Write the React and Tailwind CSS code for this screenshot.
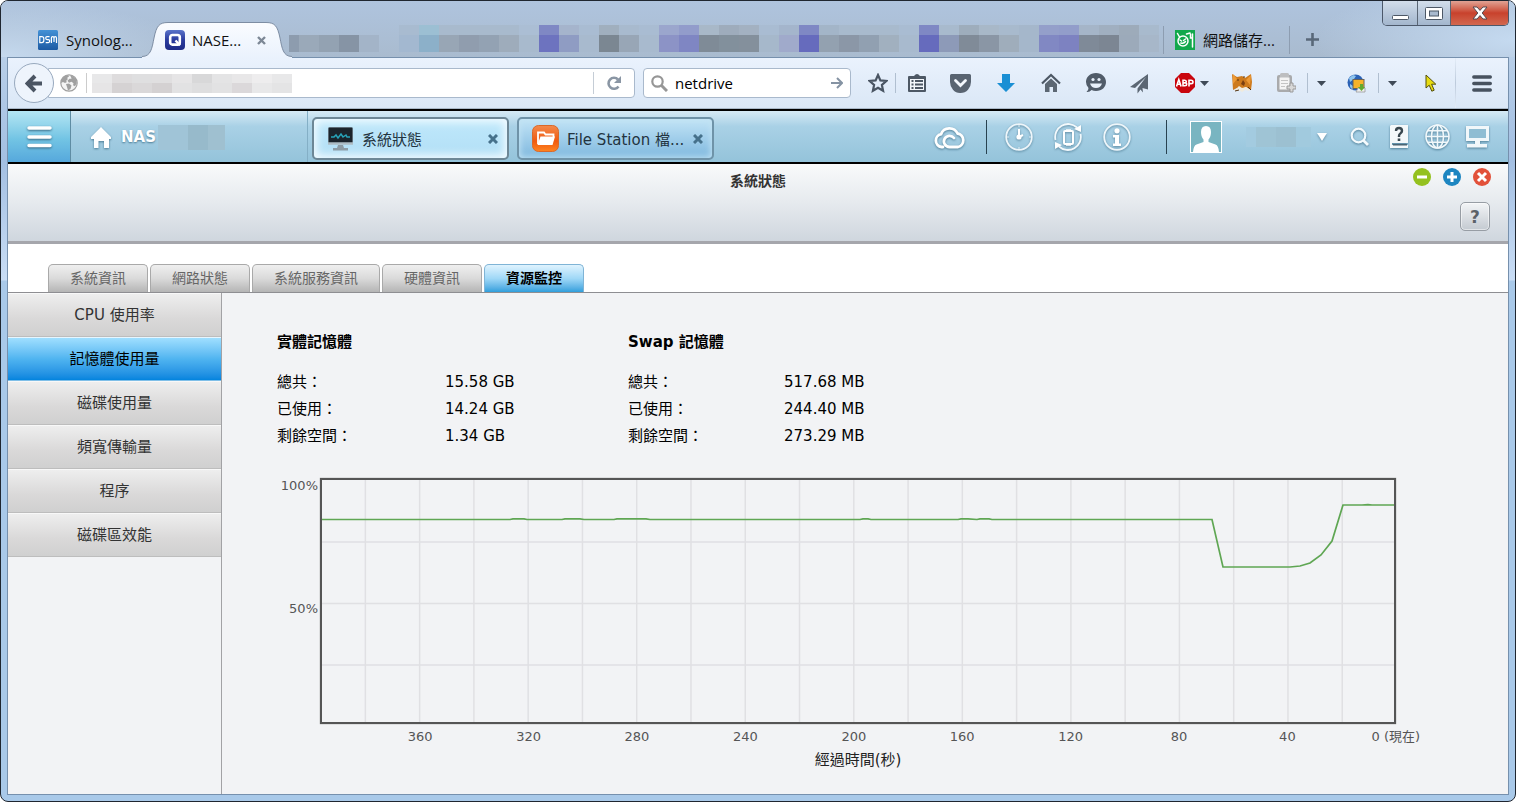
import React from "react";

// upper / lower colour of each 20px block in the blurred part of the tab strip
const STRIP_BLOCKS = [
  ["bg-[#a8bbd0]", "bg-[#a3b8d0]"],
  ["bg-[#9cbfd3]", "bg-[#8cb0c9]"],
  ["bg-[#a8bacd]", "bg-[#98a6b5]"],
  ["bg-[#a8bacd]", "bg-[#909dae]"],
  ["bg-[#a8bacd]", "bg-[#93a2b3]"],
  ["bg-[#a8bacd]", "bg-[#9eacbb]"],
  ["bg-[#abbed4]", "bg-[#a8bacd]"],
  ["bg-[#7f88c4]", "bg-[#6d73bf]"],
  ["bg-[#a5b4cc]", "bg-[#8f9cc3]"],
  ["bg-[#a9bcd2]", "bg-[#a8bace]"],
  ["bg-[#a0afbe]", "bg-[#7b8792]"],
  ["bg-[#a8bace]", "bg-[#98a6b6]"],
  ["bg-[#a9bcd2]", "bg-[#a8bace]"],
  ["bg-[#9ba6cd]", "bg-[#8c93c6]"],
  ["bg-[#929ccb]", "bg-[#7f86c3]"],
  ["bg-[#a8b8c8]", "bg-[#7f8b97]"],
  ["bg-[#9eacbc]", "bg-[#82909c]"],
  ["bg-[#a3b1c1]", "bg-[#84909c]"],
  ["bg-[#a9bcd2]", "bg-[#a6b8cb]"],
  ["bg-[#a4b5cc]", "bg-[#a0aacb]"],
  ["bg-[#7f88c4]", "bg-[#666bbd]"],
  ["bg-[#a3b5c8]", "bg-[#93a1b0]"],
  ["bg-[#a8bacd]", "bg-[#8b97a7]"],
  ["bg-[#a8bacd]", "bg-[#91a0b1]"],
  ["bg-[#a8bacd]", "bg-[#a1b0bf]"],
  ["bg-[#a9bcd2]", "bg-[#a8bace]"],
  ["bg-[#7f88c4]", "bg-[#666bbd]"],
  ["bg-[#a8bacd]", "bg-[#8d9ab8]"],
  ["bg-[#9eadbc]", "bg-[#808b98]"],
  ["bg-[#a8b8c8]", "bg-[#8a96a5]"],
  ["bg-[#a8bacd]", "bg-[#9fadbb]"],
  ["bg-[#a5b7cb]", "bg-[#a5b7cb]"],
  ["bg-[#949fca]", "bg-[#8188c3]"],
  ["bg-[#929dca]", "bg-[#7d82c1]"],
  ["bg-[#a5b5c8]", "bg-[#7f8a98]"],
  ["bg-[#a0afc0]", "bg-[#7c8693]"],
  ["bg-[#9dabba]", "bg-[#9caaba]"],
  ["bg-[#a8bacd]", "bg-[#a7b7c9]"],
];

const URL_BLOCKS = [
  ["bg-[#e8e8e9]", "bg-[#e6e5e6]"],
  ["bg-[#dedcdd]", "bg-[#d5d2d3]"],
  ["bg-[#dfdfe0]", "bg-[#dad8d9]"],
  ["bg-[#e0dfe0]", "bg-[#d4d1d2]"],
  ["bg-[#e6e5e6]", "bg-[#e2e2e3]"],
  ["bg-[#d8d8d9]", "bg-[#dededf]"],
  ["bg-[#e4e4e5]", "bg-[#e2e2e3]"],
  ["bg-[#e8e7e8]", "bg-[#dbd8da]"],
  ["bg-[#eeedee]", "bg-[#e8e8e9]"],
  ["bg-[#e8e8e9]", "bg-[#e4e4e5]"],
];

const TABS = ["系統資訊", "網路狀態", "系統服務資訊", "硬體資訊", "資源監控"];

const MENU = [
  "CPU 使用率",
  "記憶體使用量",
  "磁碟使用量",
  "頻寬傳輸量",
  "程序",
  "磁碟區效能",
];

const MEMORY = [
  {
    title: "實體記憶體",
    rows: [
      ["總共：", "15.58 GB"],
      ["已使用：", "14.24 GB"],
      ["剩餘空間：", "1.34 GB"],
    ],
    width: "w-[351px]",
    label: "w-[168px]",
  },
  {
    title: "Swap 記憶體",
    rows: [
      ["總共：", "517.68 MB"],
      ["已使用：", "244.40 MB"],
      ["剩餘空間：", "273.29 MB"],
    ],
    width: "w-[351px]",
    label: "w-[156px]",
  },
];

const X_LABELS = [360, 320, 280, 240, 200, 160, 120, 80, 40, "0 (現在)"];

const USAGE =
  "0,39.5 188,39.5 191,38.8 202,38.8 205,39.5 240,39.5 243,38.8 258,38.8 262,39.5 292,39.5 295,38.8 324,38.8 328,39.5 538,39.5 541,38.8 546,38.8 549,39.5 636,39.5 639,38.8 646,38.8 655,39.5 658,38.8 667,38.8 670,39.5 890,39.5 901,87 968,87 978,86 988,83 999,75 1010,61 1021,25 1040,25 1046,24.6 1050,25 1072,25";

const Divider = () => <span className="h-5 w-px bg-[#b0bfd0]" />;

const Caret = () => (
  <svg className="h-[5px] w-[9px]" viewBox="0 0 9 5">
    <path d="M0 0h9L4.500 5z" fill="#3f4a57" />
  </svg>
);

const Blocks = ({ cells, top, bottom }) => (
  <div className="flex min-w-0 overflow-hidden">
    {cells.map(([a, b], i) => (
      <div key={i} className="w-5 shrink-0">
        <div className={`${top} ${a}`} />
        <div className={`${bottom} ${b}`} />
      </div>
    ))}
  </div>
);

const WindowControls = () => (
  <div className="ml-auto mr-[6px] flex h-[25px] shrink-0 self-start overflow-hidden rounded-b-[5px] border border-t-0 border-[#4c586a]">
    <button
      aria-label="Minimize"
      className="flex w-[35px] items-end justify-center border-r border-[#5a6675] bg-linear-to-b from-[#d3deeb] via-[#bccbdd] via-45% to-[#a3b6cd] pb-[5px]"
    >
      <svg className="h-[5px] w-[17px]" viewBox="0 0 17 5">
        <rect x=".5" y=".5" width="16" height="4" rx="1" fill="#fff" stroke="#4d5866" />
      </svg>
    </button>
    <button
      aria-label="Maximize"
      className="flex w-[33px] items-center justify-center border-r border-[#5a6675] bg-linear-to-b from-[#d3deeb] via-[#bccbdd] via-45% to-[#a3b6cd]"
    >
      <svg className="h-[13px] w-[18px]" viewBox="0 0 18 13">
        <rect x=".5" y=".5" width="17" height="12" rx="1" fill="#fff" stroke="#4d5866" />
        <rect x="4.500" y="4" width="9" height="5" fill="#a9bacf" stroke="#4d5866" />
      </svg>
    </button>
    <button
      aria-label="Close"
      className="flex w-[57px] items-center justify-center bg-linear-to-b from-[#e0a294] via-[#c8412c] via-50% to-[#d2674f]"
    >
      <svg className="h-[14px] w-[16px]" viewBox="0 0 16 14">
        <path
          d="M1 1h4l3 3.400L11 1h4l-4.800 6 4.800 6h-4L8 9.600 5 13H1l4.800-6z"
          fill="#fff"
          stroke="#53494f"
        />
      </svg>
    </button>
  </div>
);

const TabStrip = () => (
  <div className="flex h-14 bg-[radial-gradient(ellipse_200px_56px_at_0_100%,#c5d9ee,transparent),radial-gradient(ellipse_200px_60px_at_100%_70%,#c5daf0,transparent),linear-gradient(#afc4de,#a9bbcf)] pl-[37px] text-[15px] leading-5 text-[#111]">
    <button className="mt-[29px] flex h-5 w-[104px] shrink-0 items-center gap-2">
      <svg className="size-5" viewBox="0 0 20 20">
        <defs>
          <linearGradient id="dsm" x2="0" y2="1">
            <stop offset="0" stopColor="#4391d6" />
            <stop offset="1" stopColor="#1c5aa3" />
          </linearGradient>
        </defs>
        <rect width="20" height="20" rx="1.500" fill="url(#dsm)" />
        <g fill="none" stroke="#fff" strokeWidth="1.200">
          <path d="M1.800 6.600v6h2q2 0 2-2V8.600q0-2-2-2zM11.500 6.600H9q-1.300 0-1.300 1.500T9 9.600h1.300q1.400 0 1.400 1.500t-1.400 1.500H7.700M13.400 13V8q0-1.400 1.300-1.400T16 8v4V8q0-1.400 1.200-1.400T18.500 8v5" />
        </g>
      </svg>
      Synolog...
    </button>

    {/* active tab */}
    <div className="relative w-[147px] shrink-0">
      <svg className="absolute top-5 left-0 h-9 w-[150px] overflow-visible" viewBox="0 0 150 36">
        <defs>
          <linearGradient id="tab" x2="0" y2="1">
            <stop offset="0" stopColor="#fafcff" />
            <stop offset="1" stopColor="#eaf2fd" />
          </linearGradient>
        </defs>
        <path
          d="M0 37V35.500C9 35.500 10 27 12 17 14.500 5 17 1.500 26 1.500H124c9 0 11.500 3.500 14 15.500 2 10 3 18.500 12 18.500V37z"
          fill="url(#tab)"
        />
        <path
          d="M0 35.500C9 35.500 10 27 12 17 14.500 5 17 1.500 26 1.500H124c9 0 11.500 3.500 14 15.500 2 10 3 18.500 12 18.500"
          fill="none"
          stroke="#7d8da3"
        />
      </svg>
      <div className="relative mt-[29px] flex h-5 items-center pl-[23px]">
        <svg className="mr-[7px] size-5" viewBox="0 0 20 20">
          <defs>
            <linearGradient id="qnap" x2="0" y2="1">
              <stop offset="0" stopColor="#5a74ca" />
              <stop offset=".5" stopColor="#2a3b9e" />
              <stop offset="1" stopColor="#1d2a86" />
            </linearGradient>
          </defs>
          <rect width="20" height="20" rx="4" fill="url(#qnap)" />
          <rect x="5.200" y="5" width="9.600" height="9.600" rx="2.200" fill="none" stroke="#fff" strokeWidth="2.600" />
          <path d="m10.500 10.500 4.500 4.800" stroke="#fff" strokeWidth="2.400" />
        </svg>
        NASE...
        <button aria-label="Close tab" className="mr-[23px] ml-auto">
          <svg className="size-[9px]" viewBox="0 0 9 9">
            <path d="m1 1 7 7M8 1 1 8" stroke="#7d8896" strokeWidth="2.400" />
          </svg>
        </button>
      </div>
    </div>

    <div className="mt-[34px] mr-5 flex h-[17px] shrink-0">
      <span className="w-[10px] bg-[#8d9cae]" />
      <span className="w-5 bg-[#9aa9b9]" />
      <span className="w-5 bg-[#93a2b2]" />
      <span className="w-5 bg-[#8694a5]" />
      <span className="w-5 bg-[#a3b4c8]" />
    </div>
    <div className="mt-6 flex min-w-0">
      <Blocks cells={STRIP_BLOCKS} top="h-[10px]" bottom="h-[17px]" />
    </div>
    <button className="mt-[25px] ml-1 flex h-7 shrink-0 items-center gap-2 border-x border-[#8d9db1] pr-[14px] pl-[11px]">
      <svg className="size-5" viewBox="0 0 20 20">
        <rect width="20" height="20" fill="#12a84c" />
        <g fill="none" stroke="#fff" strokeWidth="1.500" strokeLinecap="round">
          <circle cx="8" cy="11" r="5" />
          <path d="M2.500 3.500 4.500 7M11.500 4 15 3M5 10l1.500 1M10.500 9 8.500 10.500M5.800 13q3 1 4.700-1.500M17.500 4v13M15.500 4v4h2" />
        </g>
      </svg>
      網路儲存...
    </button>
    <button aria-label="New tab" className="mt-[30px] ml-4 h-4 shrink-0">
      <svg className="size-[13px]" viewBox="0 0 13 13">
        <path d="M6.500 0v13M0 6.500h13" stroke="#596879" strokeWidth="2.600" />
      </svg>
    </button>
    <WindowControls />
  </div>
);

const ToolButton = ({ label, width = "w-[45px]", children }) => (
  <button aria-label={label} className={`flex h-8 shrink-0 items-center justify-center ${width}`}>
    {children}
  </button>
);

const NavBar = () => (
  <div className="flex h-[51px] items-center border-b border-[#a9b8c8] bg-linear-to-b from-[#eaf2fd] to-[#dae7f6] pl-[6px] text-[15px] text-black">
    <button
      aria-label="Back"
      className="z-10 flex size-10 shrink-0 items-center justify-center rounded-full border border-[#98a9be] bg-[#eef4fc]"
    >
      <svg className="h-[19px] w-[18px]" viewBox="0 0 18 19">
        <path d="M17 9.500H3M10 2 2.500 9.500 10 17" fill="none" stroke="#4b5563" strokeWidth="4" />
      </svg>
    </button>
    <div className="-ml-[6px] flex h-[30px] min-w-0 flex-1 items-center rounded-r-sm border border-[#a9b9cc] bg-white pl-[11px]">
      <svg className="size-[18px] shrink-0" viewBox="0 0 18 18">
        <circle cx="9" cy="9" r="8.200" fill="#f4f4f4" stroke="#a0a0a0" strokeWidth="1.200" />
        <path
          d="M1 9Q1 4 5 2l3-1 1 1.500L7 4l1 1-2 2 1 1-2 1-2-1zM10 1.500l3 .8 3 3 .8 4-1.800 3-2-1 .5-2-2-1.500-2.500 1-1.500-2 2-2h2L11 3zM6 10l3-.5 2.500 2-1 3.500L8 16.500 7 13z"
          fill="#a0a0a0"
        />
      </svg>
      <span className="mr-[5px] ml-2 h-5 w-px bg-[#ccc]" />
      <Blocks cells={URL_BLOCKS} top="h-[9px]" bottom="h-[10px]" />
      <input aria-label="Address" className="h-6 min-w-0 flex-1 outline-none" />
      <button aria-label="Reload" className="flex h-[22px] w-[41px] items-center justify-center border-l border-[#c5cdd6]">
        <svg className="size-4" viewBox="0 0 16 16">
          <path d="M12.500 11.500A5.500 5.500 0 1 1 12 4.500" fill="none" stroke="#8a96a4" strokeWidth="2.600" />
          <path d="M15 1v7H8z" fill="#8a96a4" />
        </svg>
      </button>
    </div>
    <div className="mr-[9px] ml-2 flex h-[30px] w-[208px] shrink-0 items-center rounded-sm border border-[#a9b9cc] bg-white px-[7px]">
      <svg className="mr-[7px] size-[17px] shrink-0" viewBox="0 0 17 17">
        <circle cx="6.500" cy="6.500" r="5.200" fill="none" stroke="#969696" strokeWidth="2.200" />
        <path d="m10.500 10.500 5.500 5.500" stroke="#969696" strokeWidth="3" />
      </svg>
      <input aria-label="Search" defaultValue="netdrive" className="min-w-0 flex-1 outline-none" />
      <button aria-label="Go">
        <svg className="size-3" viewBox="0 0 12 12">
          <path d="M0 6h10M6 1l5 5-5 5" fill="none" stroke="#8593a3" strokeWidth="2" />
        </svg>
      </button>
    </div>

    <ToolButton label="Bookmark" width="w-[35px]">
      <svg className="size-5" viewBox="0 0 20 20">
        <path
          d="m10 2 2.400 5.400 5.900.6-4.400 4 1.200 5.800L10 14.800l-5.100 3L6.100 12 1.700 8l5.900-.6z"
          fill="none"
          stroke="#4a5563"
          strokeWidth="2.200"
        />
      </svg>
    </ToolButton>
    <Divider />
    <ToolButton label="Bookmarks list" width="w-[42px]">
      <svg className="size-5" viewBox="0 0 20 20">
        <path d="M7 3q3-4 6 0h5q1 0 1 1v14q0 1-1 1H2q-1 0-1-1V4q0-1 1-1z" fill="#4d5865" />
        <path d="M3 6h14v11H3z" fill="#f3f7fc" />
        <path d="M4.500 8h2M8 8h8M4.500 11.500h2M8 11.500h8M4.500 15h2M8 15h8" stroke="#4d5865" strokeWidth="1.800" />
      </svg>
    </ToolButton>
    <ToolButton label="Pocket">
      <svg className="h-[19px] w-[21px]" viewBox="0 0 21 19">
        <path d="M1.500 0h18Q21 0 21 1.500V8q0 4.500-3 7.700T10.500 19 3 15.700 0 8V1.500Q0 0 1.500 0z" fill="#596471" />
        <path d="m5.500 6.500 5 5 5-5" fill="none" stroke="#f3f7fc" strokeWidth="2.800" strokeLinecap="round" />
      </svg>
    </ToolButton>
    <ToolButton label="Downloads">
      <svg className="h-[18px] w-[18px]" viewBox="0 0 18 18">
        <path d="M5 0h8v9h5l-9 9-9-9h5z" fill="#1a8fd4" />
      </svg>
    </ToolButton>
    <ToolButton label="Home">
      <svg className="size-5" viewBox="0 0 20 20">
        <path d="M1 10.500 10 2l9 8.500" fill="none" stroke="#4d5865" strokeWidth="2.200" />
        <path d="m4 11 6-5.500L16 11v8h-4v-5H8.500v5H4z" fill="#5c6773" />
      </svg>
    </ToolButton>
    <ToolButton label="Chat">
      <svg className="h-5 w-[21px]" viewBox="0 0 21 20">
        <path d="M11 0c5.800 0 10 4 10 9s-4 9-10 9q-2.500 0-4.500-1-2 2.500-5 2 2-1.500 2-4Q1 12.500 1 9c0-5 4-9 10-9z" fill="#515c69" />
        <circle cx="8" cy="6.500" r="1.600" fill="#e8f0fa" />
        <circle cx="14" cy="6.500" r="1.600" fill="#e8f0fa" />
        <path d="M5 10.500h12q-1.500 4.500-6 4.500t-6-4.500z" fill="#e8f0fa" />
      </svg>
    </ToolButton>
    <ToolButton label="Share" width="w-[43px]">
      <svg className="h-[21px] w-[19px]" viewBox="0 0 19 21">
        <path d="M18 1 0 14l5 1L16 4 7.500 15.500v5l3-4 2.500 3-.5-4.500 5.500 1.500z" fill="#5b6673" />
      </svg>
    </ToolButton>
    <button aria-label="Adblock" className="flex h-8 w-[58px] shrink-0 items-center gap-[5px] pl-[14px]">
      <svg className="size-5" viewBox="0 0 20 20">
        <path d="M6 0h8l6 6v8l-6 6H6l-6-6V6z" fill="#c9060e" />
        <g fill="none" stroke="#fff" strokeWidth="1.600">
          <path d="m1.500 13.500 2.300-7 2.300 7M2.300 11.200h3M8 7.200v5.600h2q1.700 0 1.700-1.500T10 9.900H8h1.800q1.500 0 1.500-1.300T9.800 7.200zM14 13.500V7.200h2q2 0 2 1.700t-2 1.700h-2" />
        </g>
      </svg>
      <Caret />
    </button>
    <ToolButton label="Fox">
      <svg className="size-5" viewBox="0 0 20 20">
        <path d="M0 1l5 3 5-1 3 2 6-4 1 8-1 8-5-3-4 2-5-1-4 2z" fill="#cd7a1d" />
        <path d="M1 1l4 5-4 5zM19 2l-5 5 4 5z" fill="#ee9a35" />
        <path d="M9 11l2-4 2 3-1 3z" fill="#7b3f10" />
        <path d="M2 18l5-5 3 2 4-1 4 4-5-1-3 2-3-2z" fill="#f0eadc" />
        <path d="M5 7h2M11 4h2M16 14l3 3M3 18l4-1" stroke="#54330f" />
      </svg>
    </ToolButton>
    <ToolButton label="Clipboard" width="w-[43px]">
      <svg className="size-5" viewBox="0 0 20 20">
        <rect x="1" y="2" width="15" height="17" rx="2" fill="#a9aaac" />
        <rect x="4" y="0" width="9" height="5" rx="1.500" fill="#bdbec0" />
        <rect x="3.500" y="4.500" width="10" height="12" fill="#f4f4f4" />
        <path d="M5 7.500h7M5 10.500h7M5 13.500h4" stroke="#c4c4c4" />
        <path d="M11 13h3v-3h3v3h3v3h-3v3h-3v-3h-3z" fill="#d8d8d8" stroke="#9a9a9a" />
      </svg>
    </ToolButton>
    <Divider />
    <ToolButton label="Clipboard menu" width="w-[27px]">
      <Caret />
    </ToolButton>
    <ToolButton label="Screenshot" width="w-[43px]">
      <svg className="size-[19px]" viewBox="0 0 19 19">
        <circle cx="8.500" cy="8.500" r="8" fill="#2b62b5" />
        <path d="M2 4l4-3 3 1-2 3-4 3zM3 10l3 2v4l-3-3z" fill="#8fc5ee" />
        <rect x="6" y="5.500" width="11" height="9" fill="#f7b329" stroke="#6a6256" />
        <path d="M11 14h7v4H9z" fill="#eee" stroke="#999" strokeWidth=".8" />
        <path d="M13 10h3v3h2l-3.500 4L11 13h2z" fill="#61a92e" />
      </svg>
    </ToolButton>
    <Divider />
    <ToolButton label="Screenshot menu" width="w-[27px]">
      <Caret />
    </ToolButton>
    <ToolButton label="Pointer" width="w-[49px]">
      <svg className="h-[19px] w-3" viewBox="0 0 12 19">
        <path d="M1 1v13l3.200-2.800 2.600 6 2.400-1-2.600-6h4.200z" fill="#e8dc12" stroke="#53500d" />
      </svg>
    </ToolButton>
    <span className="h-full w-px bg-linear-to-b from-[#e4edf8] via-[#bccadb] to-[#e4edf8]" />
    <ToolButton label="Menu" width="w-[52px]">
      <svg className="h-[17px] w-5" viewBox="0 0 20 17">
        <path d="M1.800 2h16.500M1.800 8.500h16.500M1.800 15h16.500" stroke="#47525f" strokeWidth="3.400" strokeLinecap="round" />
      </svg>
    </ToolButton>
  </div>
);

const CloseX = () => (
  <svg className="size-[10px]" viewBox="0 0 10 10">
    <path d="m1 1 8 8M9 1 1 9" stroke="#46718b" strokeWidth="3" />
  </svg>
);

const TaskTab = ({ title, active, icon }) => (
  <div
    className={`flex h-[43px] w-[197px] items-center rounded-[5px] border-2 pr-[9px] pl-[13px] text-[15px] text-[#23343f] ${
      active
        ? "border-[#6d8796] bg-linear-to-b from-[#bfe8fb] to-[#b2dff6] shadow-[inset_0_0_8px_3px_#f2fbff]"
        : "border-[#6f93a8] bg-linear-to-b from-[#c2e4f6] to-[#7fb8de] shadow-[inset_0_0_6px_1px_#c3e3f3]"
    }`}
  >
    {icon}
    <button className="ml-2 flex-1 pt-1 text-left whitespace-nowrap">{title}</button>
    <button aria-label={`關閉 ${title}`}>
      <CloseX />
    </button>
  </div>
);

const TopBar = () => (
  <div className="flex h-[55px] items-center border-y-2 border-black bg-linear-to-b from-[#d6eaf5] via-[#a9d1e6] via-30% to-[#94c3da] text-white">
    <button
      aria-label="主選單"
      className="flex h-full w-[63px] shrink-0 items-center justify-center border-r border-[#5f8ca3] bg-linear-to-b from-[#b4e6f3] via-[#72c4e4] via-55% to-[#56a8dc]"
    >
      <svg className="h-[22px] w-[25px] drop-shadow-[0_1px_1px_#33647f]" viewBox="0 0 25 22">
        <path d="M2 2h21M2 11h21M2 19.500h21" stroke="#fff" strokeWidth="3.500" strokeLinecap="round" />
      </svg>
    </button>
    <div className="flex h-full w-[237px] shrink-0 items-center border-r border-[#84afc6] pt-[2px] pl-5">
      <svg className="h-[21px] w-5 drop-shadow-[0_1px_1px_#4a7b94]" viewBox="0 0 20 21">
        <path d="M10 0 20 10v2h-2v9h-5v-7H7.500v7H3v-9H0v-2z" fill="#fff" />
      </svg>
      <a href="#" className="ml-[10px] w-[37px] text-[15px] font-bold text-shadow-[0_1px_2px_#4a7b94]">
        NAS
      </a>
      <div className="flex h-[25px]">
        <span className="w-[30px] bg-[#a0c4d7]" />
        <span className="w-5 bg-[#97bacb]" />
        <span className="w-[17px] bg-[#9fc0d0]" />
      </div>
    </div>
    <div className="mt-1 ml-1 flex shrink-0 gap-2">
      <TaskTab
        active
        title="系統狀態"
        icon={
          <svg className="h-6 w-[27px]" viewBox="0 0 27 24">
            <rect x="1.500" y=".5" width="24" height="16" rx="1" fill="#1b242c" stroke="#5d6c77" />
            <path d="M4 10h3l2-2 2 3 3-4 2 3 3-2 1 2h3" fill="none" stroke="#27a3b8" strokeWidth="1.500" />
            <path d="M1 16.500h25" stroke="#aebcc4" strokeWidth="2.500" />
            <path d="M11 18h5l1 3h4v2.500H6V21h4z" fill="#8d9ca5" />
          </svg>
        }
      />
      <TaskTab
        title="File Station 檔..."
        icon={
          <svg className="size-[27px]" viewBox="0 0 27 27">
            <defs>
              <linearGradient id="fs" x2="0" y2="1">
                <stop offset="0" stopColor="#f38a4c" />
                <stop offset=".6" stopColor="#f05a10" />
                <stop offset="1" stopColor="#ff8420" />
              </linearGradient>
            </defs>
            <rect x=".5" y=".5" width="26" height="26" rx="6" fill="url(#fs)" stroke="#d9692a" />
            <path d="M6 19V7.500h6l1.500 2h8V12" fill="none" stroke="#fff" strokeWidth="1.800" />
            <path d="M8.500 11.500H23L20.500 20H5.500z" fill="#fff" />
          </svg>
        }
      />
    </div>

    <div className="ml-auto flex shrink-0 items-center pr-[18px]">
      <button aria-label="myQNAPcloud">
        <svg className="h-6 w-[33px] drop-shadow-[0_1px_1px_#4f7f98]" viewBox="0 0 33 24">
          <path
            d="M10 22H8.500A6.500 6.500 0 0 1 8 9.200 9 9 0 0 1 24.600 8.500 6.900 6.900 0 0 1 25 22H16.500a5.600 5.600 0 1 1 4.500-9"
            fill="none"
            stroke="#fff"
            strokeWidth="2.800"
            strokeLinecap="round"
          />
        </svg>
      </button>
      <span className="mr-[18px] ml-[20px] h-[34px] w-px bg-[#284250]" />
      <div className="flex gap-[21px]">
        <button aria-label="背景工作">
          <svg className="size-7 drop-shadow-[0_1px_1px_#5f8ba2]" viewBox="0 0 28 28">
            <circle cx="14" cy="14" r="12.800" fill="none" stroke="#eef6fa" strokeWidth="1.800" />
            <path d="M14 6v8l4-2" fill="none" stroke="#fff" strokeWidth="2" />
            <circle cx="14" cy="14" r="2.600" fill="#fff" />
            <path d="M14 2v2M14 24v2M2 14h2M24 14h2" stroke="#e1eff6" />
          </svg>
        </button>
        <button aria-label="外接裝置">
          <svg className="size-7 drop-shadow-[0_1px_1px_#5f8ba2]" viewBox="0 0 28 28">
            <path d="M1.500 17A13 13 0 0 1 23 4.500M26.500 11A13 13 0 0 1 5 23.500" fill="none" stroke="#f3f9fc" strokeWidth="1.800" />
            <path d="M27 2v7l-7-3zM1 26v-7l7 3z" fill="#fff" />
            <rect x="10" y="8" width="9" height="13" rx="1" fill="none" stroke="#fff" strokeWidth="2" />
            <path d="M12 7.500h5M12 21.500h5" stroke="#fff" strokeWidth="2.500" />
          </svg>
        </button>
        <button aria-label="事件通知">
          <svg className="size-7 drop-shadow-[0_1px_1px_#5f8ba2]" viewBox="0 0 28 28">
            <circle cx="14" cy="14" r="12.800" fill="none" stroke="#eef6fa" strokeWidth="1.800" />
            <circle cx="14" cy="7.800" r="2.600" fill="#fff" />
            <path d="M10 12h6v8.500h2V23h-8v-2.500h2v-6h-2z" fill="#fff" />
          </svg>
        </button>
      </div>
      <span className="mr-[23px] ml-[35px] h-[34px] w-px bg-[#284250]" />
      <svg className="size-8" viewBox="0 0 32 32">
        <rect x=".5" y=".5" width="31" height="31" fill="#79b5c1" stroke="#fff" />
        <path d="M16 5q5 0 5 6 0 5-2.500 7.500V21l7 2.500q3 1 3.500 7.500H3q.5-6.500 3.500-7.500l7-2.500v-2.500Q11 16 11 11q0-6 5-6z" fill="#fff" />
      </svg>
      <button aria-label="使用者選單" className="ml-[24px] flex items-center">
        <span className="h-5 w-[10px] bg-[#a3cbe0]" />
        <span className="h-5 w-5 bg-[#9fc4d5]" />
        <span className="h-5 w-5 bg-[#9cc0d1]" />
        <span className="mr-[6px] h-5 w-[15px] bg-[#a1cade]" />
        <svg className="h-2 w-[10px] drop-shadow-[0_1px_1px_#5f8ba2]" viewBox="0 0 10 8">
          <path d="M0 0h10L5 8z" fill="#fff" />
        </svg>
      </button>
      <button aria-label="搜尋" className="ml-[23px]">
        <svg className="size-[19px] drop-shadow-[0_1px_1px_#4f7f98]" viewBox="0 0 19 19">
          <circle cx="8.500" cy="8.500" r="6.800" fill="none" stroke="#f4fafd" strokeWidth="2.200" />
          <path d="m13.500 13.500 4.500 4.500" stroke="#f4fafd" strokeWidth="2.800" />
        </svg>
      </button>
      <button aria-label="說明" className="ml-5">
        <svg className="h-[23px] w-5 drop-shadow-[0_1px_1px_#4f7f98]" viewBox="0 0 20 23">
          <path d="M2 0h17v18H3v2h16v3H1V1z" fill="#f4f8fa" />
          <path d="M4 19.800h14" stroke="#47606e" strokeWidth="1.400" />
          <path d="M7 6q0-3 3-3t3 2.800q0 1.500-1.500 2.600T10 11v1" fill="none" stroke="#3a4850" strokeWidth="2.400" />
          <path d="M8.700 13.500h2.600V16H8.700z" fill="#3a4850" />
        </svg>
      </button>
      <button aria-label="語言" className="ml-4">
        <svg className="size-[25px] drop-shadow-[0_1px_1px_#4f7f98]" viewBox="0 0 25 25">
          <g fill="none" stroke="#f1f8fb" strokeWidth="1.600">
            <circle cx="12.500" cy="12.500" r="11.500" />
            <ellipse cx="12.500" cy="12.500" rx="6" ry="11.500" />
            <path d="M12.500 1v23M1 12.500h23M3 6.700h19M3 18.300h19" />
          </g>
        </svg>
      </button>
      <button aria-label="桌面" className="ml-[15px]">
        <svg className="h-[22px] w-[25px] drop-shadow-[0_1px_1px_#4f7f98]" viewBox="0 0 25 22">
          <path d="M1 0h23v15h-9v3h7v3.500H2V18h8v-3H1z" fill="#f1f7fa" />
          <path d="M4 3h17v9H4z" fill="#8fbdd3" />
        </svg>
      </button>
    </div>
  </div>
);

const RoundButton = ({ label, color, d }) => (
  <button aria-label={label}>
    <svg className="size-[18px]" viewBox="0 0 18 18">
      <circle cx="9" cy="9" r="9" className={color} />
      <path d={d} stroke="#fff" strokeWidth="3" />
    </svg>
  </button>
);

const AppHeader = () => (
  <header className="grid h-[80px] grid-cols-[1fr_auto_1fr] items-start border-b-3 border-b-[#a5a6ac] bg-linear-to-b from-[#f9fafb] via-[#e6eaee] via-50% to-[#cfd6de] pr-[18px]">
    <h1 className="col-start-2 mt-[7px] pl-[18px] text-[14px] leading-5 font-bold text-[#333]">系統狀態</h1>
    <div className="mt-1 flex flex-col items-end gap-4">
      <div className="-mr-[1px] flex gap-3">
        <RoundButton label="最小化" color="fill-[#94c11f]" d="M4 9h10" />
        <RoundButton label="最大化" color="fill-[#1d86c1]" d="M4 9h10M9 4v10" />
        <RoundButton label="關閉" color="fill-[#e2513a]" d="m5 5 8 8M13 5l-8 8" />
      </div>
      <button className="h-[29px] w-[30px] rounded-[5px] border border-[#979da4] bg-linear-to-b from-[#f3f5f7] to-[#c4cad1] text-[17px] leading-6 font-bold text-[#5c6268] shadow-[inset_0_0_0_1px_#ffffff80]">
        ?
      </button>
    </div>
  </header>
);

const MemoryTable = ({ title, rows, width, label }) => (
  <table className={`${width} text-left text-[15px] leading-[27px] text-black`}>
    <caption className="pb-[13px] text-left font-bold">{title}</caption>
    <tbody>
      {rows.map(([name, value]) => (
        <tr key={name}>
          <th scope="row" className={`${label} font-normal`}>
            {name}
          </th>
          <td>{value}</td>
        </tr>
      ))}
    </tbody>
  </table>
);

const MemoryChart = () => (
  <figure className="mt-7 mr-[56px] text-[13px] text-[#555]">
    <div className="flex h-[246px]">
      <div className="flex w-[43px] shrink-0 flex-col pr-[2px] text-right leading-4">
        <span className="flex-1">100%</span>
        <span className="flex-1">50%</span>
      </div>
      <div className="min-w-0 flex-1 border-2 border-[#555] shadow-[0_0_1px_#777]">
        <svg className="block size-full" viewBox="0 0 1072 242" preserveAspectRatio="none">
          <g stroke="#e0e0e3" strokeWidth="1.500">
            {Array.from({ length: 19 }, (_, i) => (
              <path key={i} d={`M${1074.5 - 54.27 * (i + 1)} 0V242`} />
            ))}
            <path d="M0 62H1072M0 123.500H1072M0 185H1072" />
          </g>
          <polyline points={USAGE} fill="none" stroke="#5fa653" strokeWidth="1.700" vectorEffect="non-scaling-stroke" />
        </svg>
      </div>
    </div>
    <div className="-mr-[54px] grid grid-cols-10 pl-[89px] text-center leading-[26px]">
      {X_LABELS.map((label) => (
        <span key={label}>{label}</span>
      ))}
    </div>
    <figcaption className="pl-[43px] text-center text-[15px] leading-5 text-[#222]">經過時間(秒)</figcaption>
  </figure>
);

const App = () => {
  return (
    <div className="flex min-h-screen flex-col overflow-hidden rounded-[8px] border border-[#1f2630] bg-[linear-gradient(#c3d7ec,#a3bfe2_160px,#c9ddf5_279px,#a9c9e9_280px)] font-['Open_Sans','Noto_Sans_CJK_TC',sans-serif]">
      <TabStrip />
      <div className="mx-[6px] mb-[6px] flex flex-1 flex-col border border-[#7690ad] bg-white">
        <NavBar />
        <div className="flex flex-1 flex-col font-['DejaVu_Sans','Noto_Sans_CJK_TC',sans-serif]">
          <TopBar />
          <AppHeader />
          <div role="tablist" className="flex gap-[2px] border-b border-[#8e8e92] pt-5 pl-10">
            {TABS.map((tab) => (
              <button
                key={tab}
                role="tab"
                aria-selected={tab === "資源監控"}
                className={`h-7 rounded-t-[5px] border border-b-0 px-[21px] text-[14px] ${
                  tab === "資源監控"
                    ? "border-[#7fb4d6] bg-linear-to-b from-[#dff3fe] via-[#9fd8f7] to-[#2f9fdc] font-bold text-black"
                    : "border-[#a9a9a9] bg-linear-to-b from-[#efefef] via-[#dadada] to-[#b5b5b5] text-[#666]"
                }`}
              >
                {tab}
              </button>
            ))}
          </div>
          <div className="flex flex-1 bg-[#f2f3f5]">
            <nav className="w-[214px] shrink-0 border-r border-[#a2a2a5]">
              {MENU.map((item) => (
                <button
                  key={item}
                  className={`block h-11 w-full border-t border-b text-[15px] ${
                    item === "記憶體使用量"
                      ? "border-t-[#e6f6ff] border-b-[#7fbfe8] bg-linear-to-b from-[#9fdfff] via-[#4fb4f0] to-[#0284de] text-black"
                      : "border-t-[#f8f8f8] border-b-[#bdbdbd] bg-linear-to-b from-[#eeeeee] via-[#d9d8d8] via-60% to-[#d0d0d0] text-[#333]"
                  }`}
                >
                  {item}
                </button>
              ))}
            </nav>
            <main className="min-w-0 flex-1 pt-9 pr-[56px] pl-[55px]">
              <div className="flex">
                {MEMORY.map((table) => (
                  <MemoryTable key={table.title} {...table} />
                ))}
              </div>
              <MemoryChart />
            </main>
          </div>
        </div>
      </div>
    </div>
  );
};

export default App;
